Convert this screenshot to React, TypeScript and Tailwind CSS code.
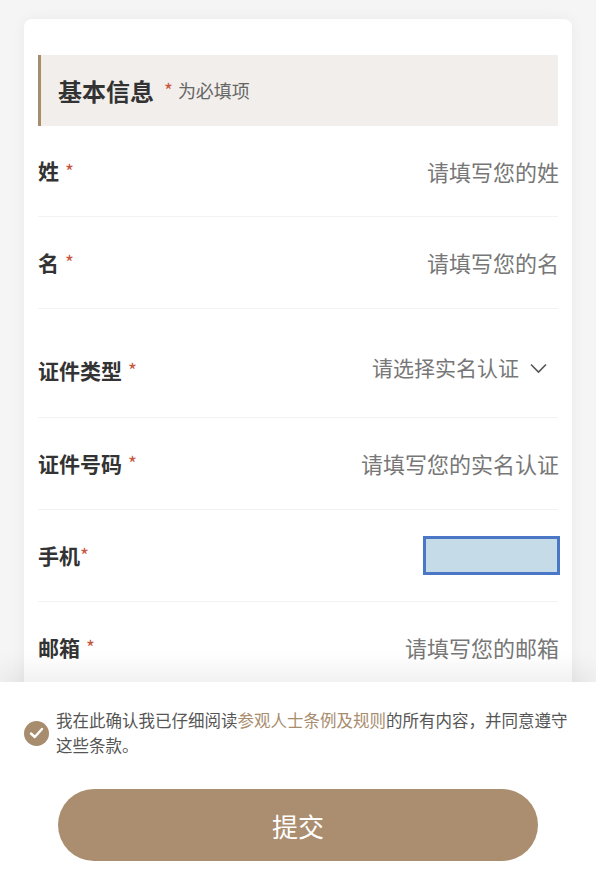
import React from 'react';

const font = { fontFamily: '"Noto Sans CJK SC", "Noto Sans", sans-serif' };

const Star = ({ tight }: { tight?: boolean }) => (
  <span className={`text-[#c8553d] text-[19px] font-normal ${tight ? 'ml-0' : 'ml-[6px]'}`}>*</span>
);

const TextRow = ({ label, placeholder, tight }: { label: string; placeholder: string; tight?: boolean }) => (
  <div className="h-[92px] flex items-center justify-between border-b border-[#f2f2f2]">
    <div className="flex items-center text-[21px] font-bold text-[#333]">
      {label}
      <Star tight={tight} />
    </div>
    <div className="text-[22px] text-[#777] -mr-[1px]">{placeholder}</div>
  </div>
);

export default function App() {
  return (
    <div className="relative h-[888px] overflow-hidden bg-[#f5f5f5]" style={font}>
      <div className="mx-6 mt-[19px] rounded-lg bg-white shadow-[0_0_14px_rgba(0,0,0,0.05)] px-[14px] pt-9 pb-40">
        <div className="h-[71px] flex items-center border-l-[3px] border-[#a88c6c] bg-[#f1eeeb] pl-[17px]">
          <span className="text-[24px] font-bold text-[#333]">基本信息</span>
          <span className="ml-[10px] text-[#c8553d] text-[19px]">*</span>
          <span className="ml-[5px] text-[18px] text-[#666]">为必填项</span>
        </div>

        <div className="h-[91px] flex items-center justify-between border-b border-[#f2f2f2]">
          <div className="flex items-center text-[21px] font-bold text-[#333]">
            姓
            <Star />
          </div>
          <div className="text-[22px] text-[#777] -mr-[1px]">请填写您的姓</div>
        </div>
        <TextRow label="名" placeholder="请填写您的名" />

        <div className="h-[109px] pt-[15px] flex items-center justify-between border-b border-[#f2f2f2]">
          <div className="flex items-center text-[21px] font-bold text-[#333]">
            证件类型
            <Star />
          </div>
          <div className="flex items-center -mt-[6px] mr-[10px] text-[21px] text-[#777]">
            请选择实名认证
            <svg className="ml-[10px]" width="19" height="12" viewBox="0 0 19 12" fill="none" stroke="#555" strokeWidth="1.6">
              <path d="M2 2.5l7.5 7.5L17 2.5" />
            </svg>
          </div>
        </div>

        <TextRow label="证件号码" placeholder="请填写您的实名认证" />

        <div className="h-[92px] flex items-center justify-between border-b border-[#f2f2f2]">
          <div className="flex items-center text-[21px] font-bold text-[#333]">
            手机
            <Star tight />
          </div>
          <div className="w-[137px] h-[39px] -mr-[2px] border-[3px] border-[#4a78c6] bg-[#c5dbe8]" />
        </div>

        <TextRow label="邮箱" placeholder="请填写您的邮箱" />
      </div>

      <div className="absolute left-0 right-0 bottom-0 h-[206px] bg-white shadow-[0_-14px_22px_rgba(0,0,0,0.06)] px-6 pt-[26px]">
        <div className="flex items-center">
          <div className="w-[25px] h-[25px] shrink-0 rounded-full bg-[#a88c6e] flex items-center justify-center">
            <svg width="15" height="12" viewBox="0 0 15 12" fill="none" stroke="#fff" strokeWidth="2.4" strokeLinecap="round" strokeLinejoin="round">
              <path d="M2 6.5l3.8 3.5L13 2" />
            </svg>
          </div>
          <p className="ml-[7px] text-[16.5px] leading-[25px] text-[#555]">
            我在此确认我已仔细阅读<span className="text-[#a88c6e]">参观人士条例及规则</span>的所有内容，并同意遵守这些条款。
          </p>
        </div>
        <button className="mt-[31px] mx-auto flex items-center justify-center w-[480px] h-[72px] rounded-full bg-[#ab8e6f] text-white text-[26px]">
          提交
        </button>
      </div>
    </div>
  );
}
